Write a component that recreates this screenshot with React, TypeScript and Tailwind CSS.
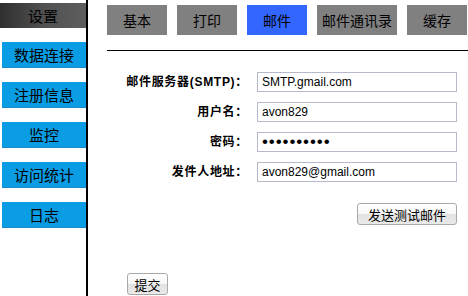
import React from "react";

const cjk = { fontFamily: '"Noto Sans CJK SC", "Liberation Sans", sans-serif' };
const latin = { fontFamily: '"Liberation Sans", "Noto Sans CJK SC", sans-serif' };

function SideBtn({ label }: { label: string }) {
  return (
    <div className="mt-[14px] ml-[2px] h-[26px] bg-[#0a9de4] border-b border-[#1f87c8] flex items-center justify-center text-[15px] text-black leading-none">
      {label}
    </div>
  );
}

function Tab({ label, active, w }: { label: string; active?: boolean; w: string }) {
  return (
    <div
      className={`${w} h-[30px] flex items-center justify-center text-[14px] text-black leading-none ${
        active ? "bg-[#3366ff]" : "bg-[#808080]"
      }`}
    >
      {label}
    </div>
  );
}

function Row({ label, value, type = "text" }: { label: string; value: string; type?: string }) {
  return (
    <div className="flex items-center h-[20px] gap-[9px]">
      <div className="w-[141px] text-right text-[12px] font-bold text-black leading-none tracking-[0.7px]" style={latin}>
        {label}
      </div>
      <input
        readOnly
        type={type}
        value={value}
        className={`w-[200px] h-[20px] border border-[#b6b9cb] bg-white px-[4px] text-black outline-none ${
          type === "password" ? "text-[17px] tracking-[0.9px]" : "text-[12px]"
        }`}
        style={latin}
      />
    </div>
  );
}

function Btn({ label, w }: { label: string; w: string }) {
  return (
    <div
      className={`${w} h-[22px] rounded-[3px] border border-[#a9a9a9] bg-[linear-gradient(#ffffff_0%,#f7f7f7_50%,#e2e2e2_51%,#e9e9e9_100%)] flex items-center justify-center text-[13px] text-black leading-none`}
      style={cjk}
    >
      {label}
    </div>
  );
}

export default function App() {
  return (
    <div className="w-[468px] h-[296px] bg-white flex overflow-hidden" style={cjk}>
      <div className="w-[88px] shrink-0 border-r-2 border-black pt-[3px]">
        <div className="h-[25px] bg-[linear-gradient(90deg,#2f2f2f,#505050_50%,#5e5e5e)] flex items-center justify-center text-[15px] text-black leading-none">
          设置
        </div>
        <SideBtn label="数据连接" />
        <SideBtn label="注册信息" />
        <SideBtn label="监控" />
        <SideBtn label="访问统计" />
        <SideBtn label="日志" />
      </div>
      <div className="flex-1 pl-[19px] pt-[5px]">
        <div className="flex gap-[10px]">
          <Tab label="基本" w="w-[60px]" />
          <Tab label="打印" w="w-[60px]" />
          <Tab label="邮件" w="w-[60px]" active />
          <Tab label="邮件通讯录" w="w-[80px]" />
          <Tab label="缓存" w="w-[60px]" />
        </div>
        <div className="mt-[15px] h-px bg-black" />
        <div className="mt-[21px] flex flex-col gap-[10px]">
          <Row label="邮件服务器(SMTP)：" value="SMTP.gmail.com" />
          <Row label="用户名：" value="avon829" />
          <Row label="密码：" value="1234567890" type="password" />
          <Row label="发件人地址：" value="avon829@gmail.com" />
        </div>
        <div className="w-[350px] flex justify-end mt-[21px]">
          <Btn label="发送测试邮件" w="w-[100px]" />
        </div>
        <div className="mt-[48px] ml-[20px]">
          <Btn label="提交" w="w-[41px]" />
        </div>
      </div>
    </div>
  );
}
